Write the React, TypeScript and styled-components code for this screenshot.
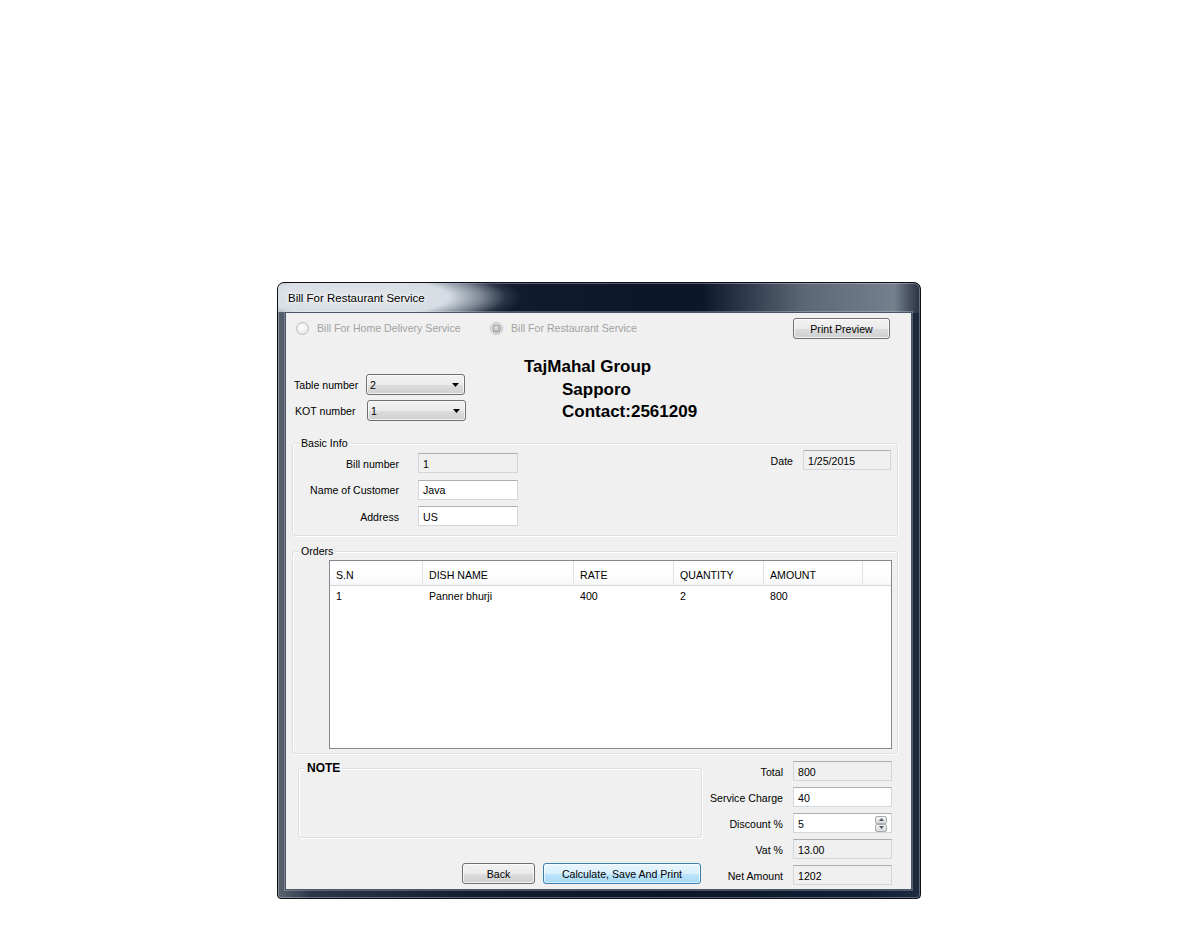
import React from 'react';
import styled, { createGlobalStyle, css } from 'styled-components';

const GlobalStyle = createGlobalStyle`
  html, body { margin: 0; padding: 0; background: #ffffff; }
  body {
    font-family: "Liberation Sans", Arial, sans-serif;
    font-size: 10.6px;
    color: #000;
  }
  * { box-sizing: border-box; }
`;

const Desktop = styled.div`
  width: 1200px;
  height: 949px;
  padding: 282px 0 0 277px;
  background: #ffffff;
`;

const Window = styled.div`
  width: 644px;
  height: 617px;
  display: flex;
  flex-direction: column;
  padding: 0 8px 8px 7px;
  border: 1px solid #0a0f18;
  border-radius: 7px 7px 4px 4px;
  background:
    linear-gradient(to right, rgba(0,0,0,0) 0%, rgba(0,0,0,0) 66%, rgba(100,112,126,0.9) 82%, rgba(122,133,146,0.95) 96%, rgba(40,50,65,1) 100%) top / 100% 30px no-repeat,
    linear-gradient(to right, #5a6471 0%, #2c3749 5%, #121d31 30%, #0b1628 60%, #101d33 92%, #1d2a40 100%);
  box-shadow: inset 0 0 0 1px rgba(255,255,255,0.3);
`;

const TitleBar = styled.div`
  height: 29px;
  margin: 0 0 0 -7px;
  display: flex;
  align-items: center;
  padding-left: 10px;
  border-radius: 6px 0 0 0;
  background:
    radial-gradient(165px 34px at 80px 14px, rgba(230,234,239,0.98) 0%, rgba(222,228,234,0.96) 55%, rgba(170,180,191,0.7) 75%, rgba(90,102,116,0.3) 90%, rgba(0,0,0,0) 100%),
    linear-gradient(to right, rgba(120,130,142,0.6) 0%, rgba(0,0,0,0) 8%);
`;

const Title = styled.span`
  font-family: "Liberation Sans", Arial, sans-serif;
  font-size: 11.5px;
  color: #000;
  text-shadow: 0 0 6px #ffffff, 0 0 3px #ffffff;
`;

const Client = styled.div`
  flex: 1;
  display: flex;
  flex-direction: column;
  background: #f0f0f0;
  border: 1px solid #4b5767;
  box-shadow: 0 0 0 1px rgba(255,255,255,0.25);
`;

const TopRow = styled.div`
  height: 25px;
  padding: 5px 21px 0 10px;
  display: flex;
  align-items: flex-start;
`;

const RadioItem = styled.div<{ $width?: number }>`
  height: 20px;
  display: flex;
  align-items: center;
  color: #a2a2a2;
  width: ${p => (p.$width ? `${p.$width}px` : 'auto')};
`;

const RadioCircle = styled.span<{ $checked?: boolean }>`
  flex: none;
  width: 13px;
  height: 13px;
  margin-right: 8px;
  border-radius: 50%;
  border: 1px solid #bcbcbc;
  background: radial-gradient(circle at 45% 40%, #ffffff 0%, #ededed 60%, #e0e0e0 100%);
  display: inline-flex;
  align-items: center;
  justify-content: center;
  ${p =>
    p.$checked &&
    css`
      &::after {
        content: '';
        width: 7px;
        height: 7px;
        border-radius: 50%;
        border: 1px solid #9a9a9a;
        background: radial-gradient(circle at 45% 40%, #e4e4e4 0%, #b4b4b4 70%, #9c9c9c 100%);
      }
    `}
`;

const PushButton = styled.button<{ $width: number; $primary?: boolean }>`
  width: ${p => p.$width}px;
  height: 21px;
  margin: 0;
  padding: 0;
  font-family: "Liberation Sans", Arial, sans-serif;
  font-size: 10.6px;
  color: #000;
  border: 1px solid #707070;
  border-radius: 3px;
  background: linear-gradient(to bottom, #f2f2f2 0%, #ebebeb 50%, #dddddd 51%, #cfcfcf 100%);
  box-shadow: inset 0 0 0 1px rgba(255,255,255,0.75);
  ${p =>
    p.$primary &&
    css`
      border-color: #3c7fb1;
      background: linear-gradient(to bottom, #eaf6fd 0%, #d9f0fc 50%, #bee6fd 51%, #a7d9f5 100%);
      box-shadow: inset 0 0 0 1px rgba(255,255,255,0.6);
    `}
`;

const TopButton = styled(PushButton)`
  margin-left: auto;
`;

const HeaderRow = styled.div`
  height: 105px;
  display: flex;
`;

const ComboColumn = styled.div`
  width: 180px;
  padding: 36px 0 0 8px;
  display: flex;
  flex-direction: column;
  gap: 5px;
`;

const ComboRow = styled.div<{ $shift?: number }>`
  height: 21px;
  display: flex;
  align-items: center;
  padding-left: ${p => p.$shift ?? 0}px;
`;

const ComboLabel = styled.span`
  width: 72px;
`;

const Combo = styled.div`
  width: 99px;
  height: 21px;
  display: flex;
  align-items: center;
  justify-content: space-between;
  padding: 0 5px 0 3px;
  border: 1px solid #707070;
  border-radius: 3px;
  background: linear-gradient(to bottom, #f2f2f2 0%, #ebebeb 50%, #dddddd 51%, #cfcfcf 100%);
  box-shadow: inset 0 0 0 1px rgba(255,255,255,0.7);
`;

const Heading = styled.div`
  margin-left: 58px;
  padding-top: 18px;
  font-family: "Liberation Sans", Arial, sans-serif;
  font-weight: bold;
  font-size: 17px;
  line-height: 22.5px;
`;

const HeadingLine = styled.div<{ $indent?: number }>`
  padding-left: ${p => p.$indent ?? 0}px;
  white-space: nowrap;
`;

const GroupBox = styled.div`
  border: 1px solid #d9e0e6;
  border-radius: 3px;
  box-shadow: inset 1px 1px 0 #ffffff, 1px 1px 0 #ffffff;
`;

const GroupTitle = styled.div<{ $bold?: boolean }>`
  width: fit-content;
  height: 13px;
  line-height: 13px;
  margin: -7px 0 -6px 6px;
  padding: 0 2px;
  background: #f0f0f0;
  white-space: nowrap;
  ${p =>
    p.$bold &&
    css`
      font-weight: bold;
      font-size: 12px;
    `}
`;

const BasicGroup = styled(GroupBox)`
  height: 93px;
  margin: 0 13px 0 6px;
`;

const BasicBody = styled.div`
  display: flex;
`;

const FieldColumn = styled.div`
  padding-top: 9px;
  display: flex;
  flex-direction: column;
  gap: 6.5px;
`;

const FieldRow = styled.div`
  height: 20px;
  display: flex;
  align-items: center;
`;

const FieldLabel = styled.span<{ $width: number; $gap: number }>`
  width: ${p => p.$width}px;
  margin-right: ${p => p.$gap}px;
  padding-top: 1px;
  text-align: right;
  white-space: nowrap;
`;

const TextBox = styled.div<{ $width: number; $readOnly?: boolean }>`
  width: ${p => p.$width}px;
  height: 20px;
  display: flex;
  align-items: center;
  padding: 1px 4px 0;
  border: 1px solid #d3d6dc;
  border-top-color: #abadb3;
  background: ${p => (p.$readOnly ? '#f0f0f0' : '#ffffff')};
`;

const DateColumn = styled.div`
  margin-left: auto;
  padding: 6px 6px 0 0;
`;

const OrdersGroup = styled(GroupBox)`
  height: 203px;
  margin: 15px 13px 0 6px;
`;

const Grid = styled.div`
  height: 189px;
  margin: 8px 5px 0 36px;
  border: 1px solid #828790;
  background: #ffffff;
`;

const GridRow = styled.div<{ $header?: boolean }>`
  display: grid;
  grid-template-columns: 93px 151px 100px 90px 99px 1fr;
  height: ${p => (p.$header ? 25 : 20)}px;
  ${p =>
    p.$header &&
    css`
      border-bottom: 1px solid #d5d5d5;
      background: linear-gradient(to bottom, #ffffff 0%, #ffffff 50%, #f6f7f9 100%);
    `}
`;

const GridCell = styled.div<{ $header?: boolean; $last?: boolean }>`
  display: flex;
  align-items: center;
  padding-left: 6px;
  white-space: nowrap;
  ${p =>
    p.$header &&
    css`
      padding-top: 3px;
    `}
  ${p =>
    p.$header &&
    !p.$last &&
    css`
      border-right: 1px solid #e0e2e6;
    `}
`;

const BottomSection = styled.div`
  display: flex;
`;

const BottomLeft = styled.div`
  width: 404px;
  margin-left: 12px;
  display: flex;
  flex-direction: column;
`;

const NoteGroup = styled(GroupBox)`
  height: 70px;
  margin-top: 14px;
`;

const ButtonRow = styled.div`
  margin-top: 25px;
  padding-right: 1px;
  display: flex;
  justify-content: flex-end;
  gap: 8px;
`;

const TotalsColumn = styled.div`
  margin: 7px 19px 0 auto;
  display: flex;
  flex-direction: column;
  gap: 6px;
`;

const SpinBox = styled(TextBox)`
  padding-right: 4px;
`;

const SpinButtons = styled.div`
  margin-left: auto;
  width: 12px;
  height: 16px;
  display: flex;
  flex-direction: column;
`;

const SpinButton = styled.div`
  flex: 1;
  display: flex;
  align-items: center;
  justify-content: center;
  border: 1px solid #a9abb0;
  border-radius: 2px;
  background: linear-gradient(to bottom, #f6f6f6 0%, #e6e6e6 50%, #dadada 100%);
`;

const Arrow = ({ up }: { up?: boolean }) => (
  <svg width="5" height="3" viewBox="0 0 5 3">
    <path d={up ? 'M0 3h5L2.5 0z' : 'M0 0h5L2.5 3z'} fill="#4d5a6e" />
  </svg>
);

const DropArrow = () => (
  <svg width="7" height="4" viewBox="0 0 7 4">
    <path d="M0 0h7L3.5 4z" fill="#000" />
  </svg>
);

const columns = ['S.N', 'DISH NAME', 'RATE', 'QUANTITY', 'AMOUNT'];
const rows = [['1', 'Panner bhurji', '400', '2', '800']];

const totals: { label: string; value: string; readOnly?: boolean; spin?: boolean }[] = [
  { label: 'Total', value: '800', readOnly: true },
  { label: 'Service Charge', value: '40' },
  { label: 'Discount %', value: '5', spin: true },
  { label: 'Vat %', value: '13.00', readOnly: true },
  { label: 'Net Amount', value: '1202', readOnly: true },
];

export default function App() {
  return (
    <>
      <GlobalStyle />
      <Desktop>
        <Window>
          <TitleBar>
            <Title>Bill For Restaurant Service</Title>
          </TitleBar>
          <Client>
            <TopRow>
              <RadioItem $width={194}>
                <RadioCircle />
                Bill For Home Delivery Service
              </RadioItem>
              <RadioItem>
                <RadioCircle $checked />
                Bill For Restaurant Service
              </RadioItem>
              <TopButton $width={97}>Print Preview</TopButton>
            </TopRow>

            <HeaderRow>
              <ComboColumn>
                <ComboRow>
                  <ComboLabel>Table number</ComboLabel>
                  <Combo>
                    <span>2</span>
                    <DropArrow />
                  </Combo>
                </ComboRow>
                <ComboRow $shift={1}>
                  <ComboLabel>KOT number</ComboLabel>
                  <Combo>
                    <span>1</span>
                    <DropArrow />
                  </Combo>
                </ComboRow>
              </ComboColumn>
              <Heading>
                <HeadingLine>TajMahal Group</HeadingLine>
                <HeadingLine $indent={38}>Sapporo</HeadingLine>
                <HeadingLine $indent={38}>Contact:2561209</HeadingLine>
              </Heading>
            </HeaderRow>

            <BasicGroup>
              <GroupTitle>Basic Info</GroupTitle>
              <BasicBody>
                <FieldColumn>
                  <FieldRow>
                    <FieldLabel $width={106} $gap={19}>Bill number</FieldLabel>
                    <TextBox $width={100} $readOnly>1</TextBox>
                  </FieldRow>
                  <FieldRow>
                    <FieldLabel $width={106} $gap={19}>Name of Customer</FieldLabel>
                    <TextBox $width={100}>Java</TextBox>
                  </FieldRow>
                  <FieldRow>
                    <FieldLabel $width={106} $gap={19}>Address</FieldLabel>
                    <TextBox $width={100}>US</TextBox>
                  </FieldRow>
                </FieldColumn>
                <DateColumn>
                  <FieldRow>
                    <FieldLabel $width={30} $gap={10}>Date</FieldLabel>
                    <TextBox $width={88} $readOnly>1/25/2015</TextBox>
                  </FieldRow>
                </DateColumn>
              </BasicBody>
            </BasicGroup>

            <OrdersGroup>
              <GroupTitle>Orders</GroupTitle>
              <Grid>
                <GridRow $header>
                  {columns.map(c => (
                    <GridCell key={c} $header>
                      {c}
                    </GridCell>
                  ))}
                  <GridCell $header $last />
                </GridRow>
                {rows.map((r, i) => (
                  <GridRow key={i}>
                    {r.map((v, j) => (
                      <GridCell key={j}>{v}</GridCell>
                    ))}
                    <GridCell />
                  </GridRow>
                ))}
              </Grid>
            </OrdersGroup>

            <BottomSection>
              <BottomLeft>
                <NoteGroup>
                  <GroupTitle $bold>NOTE</GroupTitle>
                </NoteGroup>
                <ButtonRow>
                  <PushButton $width={73}>Back</PushButton>
                  <PushButton $width={158} $primary>
                    Calculate, Save And Print
                  </PushButton>
                </ButtonRow>
              </BottomLeft>
              <TotalsColumn>
                {totals.map(t => (
                  <FieldRow key={t.label}>
                    <FieldLabel $width={80} $gap={10}>{t.label}</FieldLabel>
                    {t.spin ? (
                      <SpinBox $width={99}>
                        {t.value}
                        <SpinButtons>
                          <SpinButton>
                            <Arrow up />
                          </SpinButton>
                          <SpinButton>
                            <Arrow />
                          </SpinButton>
                        </SpinButtons>
                      </SpinBox>
                    ) : (
                      <TextBox $width={99} $readOnly={t.readOnly}>
                        {t.value}
                      </TextBox>
                    )}
                  </FieldRow>
                ))}
              </TotalsColumn>
            </BottomSection>
          </Client>
        </Window>
      </Desktop>
    </>
  );
}
